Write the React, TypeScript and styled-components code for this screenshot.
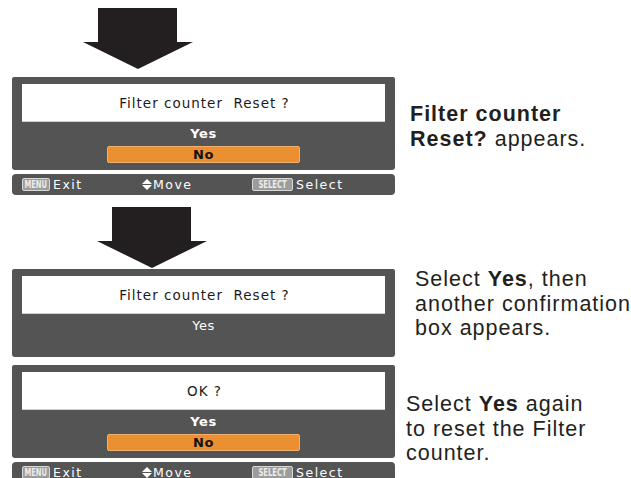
import React from "react";
import styled, { createGlobalStyle } from "styled-components";

const GlobalStyle = createGlobalStyle`
  html, body {
    margin: 0;
    padding: 0;
    background: #fff;
  }
  body {
    font-family: "Liberation Sans", Arial, sans-serif;
  }
`;

const Page = styled.div`
  width: 631px;
  height: 478px;
  overflow: hidden;
  display: grid;
  grid-template-columns: 383px 1fr;
  column-gap: 11px;
  padding: 8px 0 0 12px;
  box-sizing: border-box;
  align-items: start;
`;

const ArrowRow = styled.div<{ $offset: number; $after: number }>`
  grid-column: 1 / 2;
  height: 61px;
  padding-left: ${(p) => p.$offset}px;
  margin-bottom: ${(p) => p.$after}px;
`;

const Step = styled.div<{ $after: number }>`
  display: flex;
  flex-direction: column;
  gap: 4px;
  margin-bottom: ${(p) => p.$after}px;
`;

const Panel = styled.div`
  background: #545454;
  border-radius: 2px 2px 3px 3px;
  padding: 7px 10px;
  display: flex;
  flex-direction: column;
  align-items: center;
`;

const Question = styled.div`
  align-self: stretch;
  height: 38px;
  background: #fff;
  border-bottom: 1px solid #cfcfcf;
  box-sizing: border-box;
  display: flex;
  align-items: center;
  justify-content: center;
  font-family: "DejaVu Sans", sans-serif;
  font-size: 13.5px;
  letter-spacing: 1px;
  color: #1a1a1a;
  white-space: pre;
  padding-left: 2px;
`;

const Options = styled.div<{ $height: number }>`
  height: ${(p) => p.$height}px;
  display: flex;
  flex-direction: column;
  align-items: center;
`;

const Option = styled.div<{ $selected?: boolean; $plain?: boolean }>`
  width: 193px;
  height: ${(p) => (p.$selected ? 17 : 22)}px;
  margin-top: ${(p) => (p.$selected ? 2 : 0)}px;
  box-sizing: border-box;
  display: flex;
  align-items: center;
  justify-content: center;
  font-family: "DejaVu Sans", sans-serif;
  font-size: 13px;
  font-weight: ${(p) => (p.$plain ? 400 : 700)};
  letter-spacing: 0.5px;
  color: ${(p) => (p.$selected ? "#111" : "#fff")};
  background: ${(p) => (p.$selected ? "#ea9030" : "transparent")};
  border: ${(p) => (p.$selected ? "1px solid #f0b070" : "none")};
  border-radius: 2px;
`;

const Footer = styled.div`
  height: 21px;
  background: #545454;
  border-radius: 4px;
  display: flex;
  align-items: center;
  padding-left: 10px;
  color: #fff;
  font-family: "DejaVu Sans", sans-serif;
  font-size: 12.5px;
  letter-spacing: 1.5px;
`;

const FooterItem = styled.div<{ $width: number; $gap: number }>`
  width: ${(p) => p.$width}px;
  display: flex;
  align-items: center;
  gap: ${(p) => p.$gap}px;
`;

const Key = styled.span<{ $width: number }>`
  width: ${(p) => p.$width}px;
  height: 13px;
  box-sizing: border-box;
  background: #9c9c9c;
  border: 1px solid #d8d8d8;
  border-radius: 2px;
  display: flex;
  align-items: center;
  justify-content: center;
  overflow: hidden;
`;

const KeyLabel = styled.span`
  display: inline-block;
  transform: scaleX(0.72);
  color: #ececec;
  font-family: "DejaVu Sans Condensed", "DejaVu Sans", sans-serif;
  font-size: 10.5px;
  font-weight: 700;
  letter-spacing: 0;
  line-height: 11px;
  white-space: nowrap;
`;

const Note = styled.p<{ $indent: number; $top: number }>`
  margin: ${(p) => p.$top}px 0 0 ${(p) => p.$indent}px;
  font-family: "Liberation Sans", Arial, sans-serif;
  font-size: 21.5px;
  letter-spacing: 1px;
  line-height: 24.5px;
  color: #231f20;
  white-space: nowrap;
`;

const Arrow = () => (
  <svg width="110" height="61" viewBox="0 0 110 61">
    <polygon points="15,0 94,0 94,34 110,34 55,61 0,34 15,34" fill="#231f20" />
  </svg>
);

const MoveIcon = () => (
  <svg width="10" height="11" viewBox="0 0 10 11">
    <polygon points="0,5 5,0 10,5" fill="#fff" />
    <polygon points="0,6 10,6 5,11" fill="#fff" />
  </svg>
);

const Guide = () => (
  <Footer>
    <FooterItem $width={120} $gap={3}>
      <Key $width={28}>
        <KeyLabel>MENU</KeyLabel>
      </Key>
      Exit
    </FooterItem>
    <FooterItem $width={110} $gap={1}>
      <MoveIcon />
      Move
    </FooterItem>
    <FooterItem $width={110} $gap={3}>
      <Key $width={41}>
        <KeyLabel>SELECT</KeyLabel>
      </Key>
      Select
    </FooterItem>
  </Footer>
);

export default function App() {
  return (
    <>
      <GlobalStyle />
      <Page>
        <ArrowRow $offset={71} $after={8}>
          <Arrow />
        </ArrowRow>
        <div />

        <Step $after={12}>
          <Panel>
            <Question>Filter counter  Reset ?</Question>
            <Options $height={41}>
              <Option>Yes</Option>
              <Option $selected>No</Option>
            </Options>
          </Panel>
          <Guide />
        </Step>
        <Note $indent={4} $top={25}>
          <b>Filter counter</b>
          <br />
          <b>Reset?</b> appears.
        </Note>

        <ArrowRow $offset={85} $after={1}>
          <Arrow />
        </ArrowRow>
        <div />

        <Step $after={8}>
          <Panel>
            <Question>Filter counter  Reset ?</Question>
            <Options $height={36}>
              <Option $plain>Yes</Option>
            </Options>
          </Panel>
        </Step>
        <Note $indent={9} $top={-2}>
          Select <b>Yes</b>, then
          <br />
          another confirmation
          <br />
          box appears.
        </Note>

        <Step $after={0}>
          <Panel>
            <Question>OK ?</Question>
            <Options $height={41}>
              <Option>Yes</Option>
              <Option $selected>No</Option>
            </Options>
          </Panel>
          <Guide />
        </Step>
        <Note $indent={0} $top={27}>
          Select <b>Yes</b> again
          <br />
          to reset the Filter
          <br />
          counter.
        </Note>
      </Page>
    </>
  );
}
